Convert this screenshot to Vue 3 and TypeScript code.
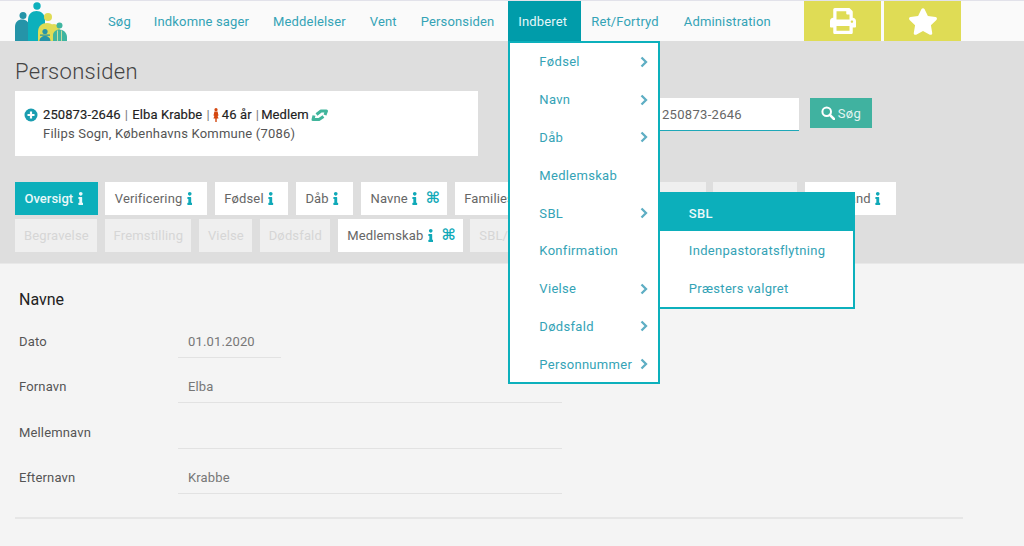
<script setup lang="ts">
const links: string[] = ['Søg', 'Indkomne sager', 'Meddelelser', 'Vent', 'Personsiden']
const linksAfter: string[] = ['Ret/Fortryd', 'Administration']

interface MenuItem { label: string; sub: boolean }
const menu: MenuItem[] = [
  { label: 'Fødsel', sub: true },
  { label: 'Navn', sub: true },
  { label: 'Dåb', sub: true },
  { label: 'Medlemskab', sub: false },
  { label: 'SBL', sub: true },
  { label: 'Konfirmation', sub: false },
  { label: 'Vielse', sub: true },
  { label: 'Dødsfald', sub: true },
  { label: 'Personnummer', sub: true },
]
const subMenu: string[] = ['Indenpastoratsflytning', 'Præsters valgret']

interface Tab { label: string; kind: 'active' | 'on' | 'off'; info: boolean; cmd: boolean }
const row1: Tab[] = [
  { label: 'Oversigt', kind: 'active', info: true, cmd: false },
  { label: 'Verificering', kind: 'on', info: true, cmd: false },
  { label: 'Fødsel', kind: 'on', info: true, cmd: false },
  { label: 'Dåb', kind: 'on', info: true, cmd: false },
  { label: 'Navne', kind: 'on', info: true, cmd: true },
  { label: 'Familiesager', kind: 'on', info: true, cmd: false },
  { label: 'Konfirmations/dato', kind: 'off', info: false, cmd: false },
  { label: 'Sognebånd', kind: 'off', info: false, cmd: false },
  { label: 'Hjemland', kind: 'on', info: true, cmd: false },
]
const row2: Tab[] = [
  { label: 'Begravelse', kind: 'off', info: false, cmd: false },
  { label: 'Fremstilling', kind: 'off', info: false, cmd: false },
  { label: 'Vielse', kind: 'off', info: false, cmd: false },
  { label: 'Dødsfald', kind: 'off', info: false, cmd: false },
  { label: 'Medlemskab', kind: 'on', info: true, cmd: true },
  { label: 'SBL/Flytning', kind: 'off', info: false, cmd: false },
]
const rows: Tab[][] = [row1, row2]

interface Field { label: string; value: string; short: boolean }
const fields: Field[] = [
  { label: 'Dato', value: '01.01.2020', short: true },
  { label: 'Fornavn', value: 'Elba', short: false },
  { label: 'Mellemnavn', value: '', short: false },
  { label: 'Efternavn', value: 'Krabbe', short: false },
]
const infoPath =
  'M20 424.229h20V279.771H20c-11.046 0-20-8.954-20-20V212c0-11.046 8.954-20 20-20h112c11.046 0 20 8.954 20 20v212.229h20c11.046 0 20 8.954 20 20V492c0 11.046-8.954 20-20 20H20c-11.046 0-20-8.954-20-20v-47.771c0-11.046 8.954-20 20-20zM96 0C56.235 0 24 32.235 24 72s32.235 72 72 72 72-32.235 72-72S135.764 0 96 0z'
</script>

<template>
  <div class="page">
    <nav class="nav">
      <svg class="logo" viewBox="0 0 52 40" aria-label="logo">
        <circle cx="8" cy="14.500" r="3.500" fill="#2594a8" />
        <path d="M0 40V26c0-5 3-7.500 7-7.500s7.500 2.500 7.500 7.500v14z" fill="#2594a8" />
        <circle cx="22" cy="5" r="3.700" fill="#0cb0bc" />
        <path d="M13 40V19c0-6 4-9 8.500-9S30 13 30 19v21z" fill="#0cb0bc" />
        <circle cx="33" cy="16" r="4" fill="#dfdc55" />
        <path d="M23 40V31c0-6 4-9 9-9 3 0 5 1 7 3v15z" fill="#dfdc55" />
        <path d="M33 40V30c0-4 3-7 6-7s6 3 6 7v10z" fill="#dfdc55" />
        <circle cx="44.500" cy="24.500" r="3" fill="#3fb5a0" />
        <path d="M38 40v-6c0-3 3-5.500 6.500-5.500S52 31.500 52 36v4z" fill="#3fb5a0" />
        <path d="M42.500 29.500v10.500M46.500 29.500v10.500" stroke="#e9e4a0" stroke-width=".8" fill="none" />
        <circle cx="30" cy="30.500" r="2.600" fill="#2594a8" />
        <path d="M25 33.500h10v1.200h-10zM24.500 40c0-3 2.500-5 5.500-5s5.500 2 5.500 5z" fill="#2594a8" />
      </svg>
      <a v-for="l in links" :key="l" class="link">{{ l }}</a>
      <div class="link link-active">
        Indberet
        <ul class="menu">
          <li v-for="m in menu" :key="m.label" class="menu-item">
            <span>{{ m.label }}</span>
            <svg v-if="m.sub" class="chev" viewBox="0 0 8 12">
              <path d="M1.500 1.500 6 6l-4.500 4.500" fill="none" stroke="#5eaec4" stroke-width="2.300" />
            </svg>
          </li>
          <li class="sub">
            <div class="sub-item sub-head">SBL</div>
            <div v-for="s in subMenu" :key="s" class="sub-item">{{ s }}</div>
          </li>
        </ul>
      </div>
      <a v-for="l in linksAfter" :key="l" class="link">{{ l }}</a>
      <div class="actions">
        <button class="action">
          <svg class="print" viewBox="0 0 512 512" fill="#fff">
            <path d="M448 192V77.250c0-8.490-3.370-16.620-9.370-22.630L393.370 9.370c-6-6-14.140-9.370-22.630-9.370H96C78.330 0 64 14.330 64 32v160c-35.350 0-64 28.650-64 64v112c0 8.840 7.160 16 16 16h48v96c0 17.670 14.330 32 32 32h320c17.670 0 32-14.330 32-32v-96h48c8.840 0 16-7.160 16-16V256c0-35.350-28.650-64-64-64zm-64 256H128v-96h256v96zm0-224H128V64h192v48c0 8.840 7.160 16 16 16h48v96zm48 72c-13.250 0-24-10.750-24-24 0-13.260 10.750-24 24-24s24 10.740 24 24c0 13.250-10.750 24-24 24z" />
          </svg>
        </button>
        <button class="action">
          <svg class="star" viewBox="0 0 576 512" fill="#fff">
            <path d="M259.300 17.800L194 150.200 47.900 171.500c-26.200 3.800-36.700 36.100-17.700 54.600l105.700 103-25 145.500c-4.500 26.300 23.200 46 46.400 33.700L288 439.600l130.700 68.700c23.200 12.200 50.900-7.400 46.400-33.700l-25-145.500 105.700-103c19-18.500 8.500-50.800-17.700-54.600L382 150.200 316.700 17.800c-11.700-23.600-45.600-23.900-57.400 0z" />
          </svg>
        </button>
      </div>
    </nav>

    <header class="band">
      <div class="top">
        <div class="person">
          <h1 class="title">Personsiden</h1>
          <div class="card">
            <div class="line1">
              <svg class="plus" viewBox="0 0 14 14">
                <circle cx="7" cy="7" r="6.500" fill="#1a9db0" />
                <path d="M7 3.500v7M3.500 7h7" stroke="#fff" stroke-width="2.200" />
              </svg>
              <span class="strong">250873-2646</span><span class="sep">|</span>
              <span class="strong">Elba Krabbe</span><span class="sep">|</span>
              <svg class="woman" viewBox="0 0 8 14" fill="#d4470f">
                <circle cx="4" cy="1.700" r="1.600" />
                <path d="M2.400 3.600h3.200l.9 4-1 .5-.3-1.200 1.400 3.500H5V14H4.300v-3.600h-.6V14H3v-3.600H1.400L2.800 6.900l-.3 1.200-1-.5z" />
              </svg>
              <span class="strong">46 år</span><span class="sep sep-tight">|</span>
              <span class="strong">Medlem</span>
              <svg class="shake" viewBox="0 0 18 14">
                <path d="M5.500 6.500 10 3h5.500L14 7" fill="none" stroke="#41b59c" stroke-width="3" stroke-linejoin="round" />
                <path d="M3 7.500 2 11.500h6L12.500 8.500" fill="none" stroke="#41b59c" stroke-width="3" stroke-linejoin="round" />
              </svg>
            </div>
            <div class="line2">Filips Sogn, Københavns Kommune (7086)</div>
          </div>
        </div>
        <div class="search">
          <div class="search-input">250873-2646</div>
          <button class="search-btn">
            <svg class="glass" viewBox="0 0 14 14">
              <circle cx="5.700" cy="5.700" r="4.300" fill="none" stroke="#fff" stroke-width="2" />
              <path d="M8.800 8.800 13 13" stroke="#fff" stroke-width="2.500" stroke-linecap="round" />
            </svg>
            Søg
          </button>
        </div>
      </div>

      <div class="tabs">
        <div v-for="(row, i) in rows" :key="i" class="tab-row">
          <div v-for="t in row" :key="t.label" class="tab" :class="['tab-' + t.kind, { 'has-cmd': t.cmd }]">
            <span>{{ t.label }}</span>
            <svg v-if="t.info" class="info" viewBox="0 0 192 512"><path :d="infoPath" /></svg>
            <span v-if="t.cmd" class="cmd">⌘</span>
          </div>
        </div>
      </div>
    </header>

    <main class="content">
      <h2 class="heading">Navne</h2>
      <div v-for="f in fields" :key="f.label" class="field">
        <label class="field-label">{{ f.label }}</label>
        <div class="field-value" :class="{ short: f.short }">{{ f.value }}</div>
      </div>
      <hr class="rule" />
    </main>
  </div>
</template>

<style scoped>
.page {
  width: 1024px;
  height: 546px;
  overflow: hidden;
  font-family: Roboto, "Liberation Sans", sans-serif;
  font-size: 13px;
  letter-spacing: 0.15px;
  background: #f4f4f4;
  color: #555;
}
.nav {
  display: flex;
  height: 41px;
  box-sizing: border-box;
  align-items: stretch;
  background: #fafafa;
  border-top: 1px solid #e2e2ea;
  padding-left: 15px;
}
.logo {
  width: 52px;
  height: 40px;
  margin-right: 31px;
  flex: none;
}
.link {
  display: flex;
  align-items: center;
  padding: 0 14px 0 10px;
  color: #34a3b6;
  white-space: nowrap;
  position: relative;
}
.logo + .link {
  padding-right: 13px;
}
.link-active {
  background: #009caa;
  color: #e6f7f8;
}
.link-active + .link {
  padding-right: 15px;
}
.menu {
  position: absolute;
  left: 0;
  top: 100%;
  margin: 0;
  padding: 0;
  list-style: none;
  width: 151.500px;
  height: 343px;
  box-sizing: border-box;
  background: #fff;
  border: 2px solid #0cb0bc;
  z-index: 5;
  letter-spacing: 0.3px;
}
.menu-item {
  display: flex;
  align-items: center;
  justify-content: space-between;
  height: 37.800px;
  padding: 0 10px 0 29px;
  color: #34a3b6;
}
.chev {
  width: 8px;
  height: 12px;
  flex: none;
}
.sub {
  position: absolute;
  left: 149.500px;
  top: 149px;
  width: 195px;
  height: 117px;
  box-sizing: border-box;
  background: #fff;
  border: 2px solid #0cb0bc;
  border-left: 0;
}
.sub-item {
  height: 38px;
  display: flex;
  align-items: center;
  padding-left: 29px;
  color: #34a3b6;
}
.sub-head {
  height: 39px;
  box-sizing: border-box;
  margin-top: -2px;
  padding-top: 3px;
  background: #0cafbb;
  color: #eaf8f9;
  font-weight: 500;
}
.actions {
  display: flex;
  gap: 2.500px;
  margin-left: 19px;
}
.action {
  width: 77.500px;
  border: 0;
  padding: 0;
  background: #dfdc55;
  display: flex;
  align-items: center;
  justify-content: center;
}
.print {
  width: 28px;
  height: 26px;
}
.star {
  width: 30px;
  height: 27px;
}
.band {
  height: 223px;
  box-sizing: border-box;
  background: #dedede;
  border-bottom: 1px solid #e8e8e8;
  padding: 0 15px;
}
.top {
  display: flex;
  align-items: flex-start;
  height: 141px;
}
.person {
  width: 463px;
}
.title {
  margin: 17px 0 0;
  height: 33px;
  font-size: 22px;
  line-height: 27px;
  font-weight: 300;
  color: #444;
  letter-spacing: 0.3px;
}
.card {
  height: 65px;
  box-sizing: border-box;
  background: #fff;
  padding: 14px 9px 0;
  line-height: 19px;
  letter-spacing: 0.3px;
}
.line1 {
  display: flex;
  align-items: center;
  color: #222;
}
.strong {
  color: #222;
  font-weight: 400;
  letter-spacing: 0.1px;
  -webkit-text-stroke: 0.15px #222;
}
.sep {
  color: #777;
  margin: 0 4px;
}
.sep-tight {
  margin-right: 2px;
}
.plus {
  width: 14px;
  height: 14px;
  margin-right: 5px;
}
.woman {
  width: 8px;
  height: 14px;
  margin-left: -2px;
  margin-right: 2px;
}
.shake {
  width: 18px;
  height: 14px;
  margin-left: 2px;
}
.line2 {
  padding-left: 19px;
  color: #555;
  letter-spacing: 0.2px;
}
.search {
  display: flex;
  align-items: flex-start;
  margin: 57px 0 0 172px;
  gap: 11px;
  letter-spacing: 0.3px;
}
.search-input {
  width: 149px;
  height: 33px;
  box-sizing: border-box;
  background: #fff;
  border-bottom: 1px solid #1ea8b8;
  padding-left: 12px;
  line-height: 33px;
  color: #666;
}
.search-btn {
  width: 62px;
  height: 30px;
  border: 0;
  padding: 0;
  background: #40b2a0;
  color: #e2f4f1;
  font: inherit;
  letter-spacing: 0.3px;
  display: flex;
  align-items: center;
  justify-content: center;
  gap: 3px;
}
.glass {
  width: 14px;
  height: 14px;
}
.tabs {
  display: flex;
  flex-direction: column;
  gap: 4px;
}
.tab-row {
  display: flex;
  gap: 7.500px;
  white-space: nowrap;
}
.tab {
  height: 33px;
  box-sizing: border-box;
  display: flex;
  align-items: center;
  padding: 0 14.700px 0 9.500px;
  flex: none;
}
.tab-row:first-child .tab:last-child {
  padding-right: 15.700px;
}
.tab-active {
  background: #0cafbb;
  color: #e9f8f9;
  font-weight: 500;
  letter-spacing: 0;
}
.tab-on {
  background: #fff;
  color: #666;
}
.tab-off {
  background: #efefef;
  color: #d6d6d6;
  padding: 0 8.300px 0 9px;
}
.has-cmd {
  padding-right: 7px;
}
.info {
  width: 5.500px;
  height: 13px;
  margin-left: 4.500px;
  fill: #10a9b8;
}
.tab-active .info {
  fill: #e9f8f9;
}
.cmd {
  margin-left: 8px;
  font-family: "DejaVu Sans", sans-serif;
  font-size: 15.500px;
  font-weight: 700;
  line-height: 1;
  letter-spacing: 0;
  color: #10a9b8;
}
.content {
  padding: 26px 0 0 19px;
  position: relative;
}
.heading {
  margin: 0 0 14px;
  font-size: 16px;
  line-height: 20px;
  font-weight: 400;
  color: #222;
  letter-spacing: 0;
}
.field {
  display: flex;
  align-items: flex-start;
  height: 45.300px;
}
.field-label {
  width: 159px;
  line-height: 24px;
  padding-top: 6px;
  color: #555;
}
.field-value {
  width: 384px;
  height: 34px;
  box-sizing: border-box;
  border-bottom: 1px solid #e2e2e2;
  padding: 6px 0 0 10px;
  line-height: 24px;
  color: #777;
}
.field-value.short {
  width: 103px;
}
.rule {
  position: absolute;
  left: 15px;
  top: 253px;
  width: 948px;
  height: 2px;
  margin: 0;
  border: 0;
  background: #e6e6e6;
}
</style>
